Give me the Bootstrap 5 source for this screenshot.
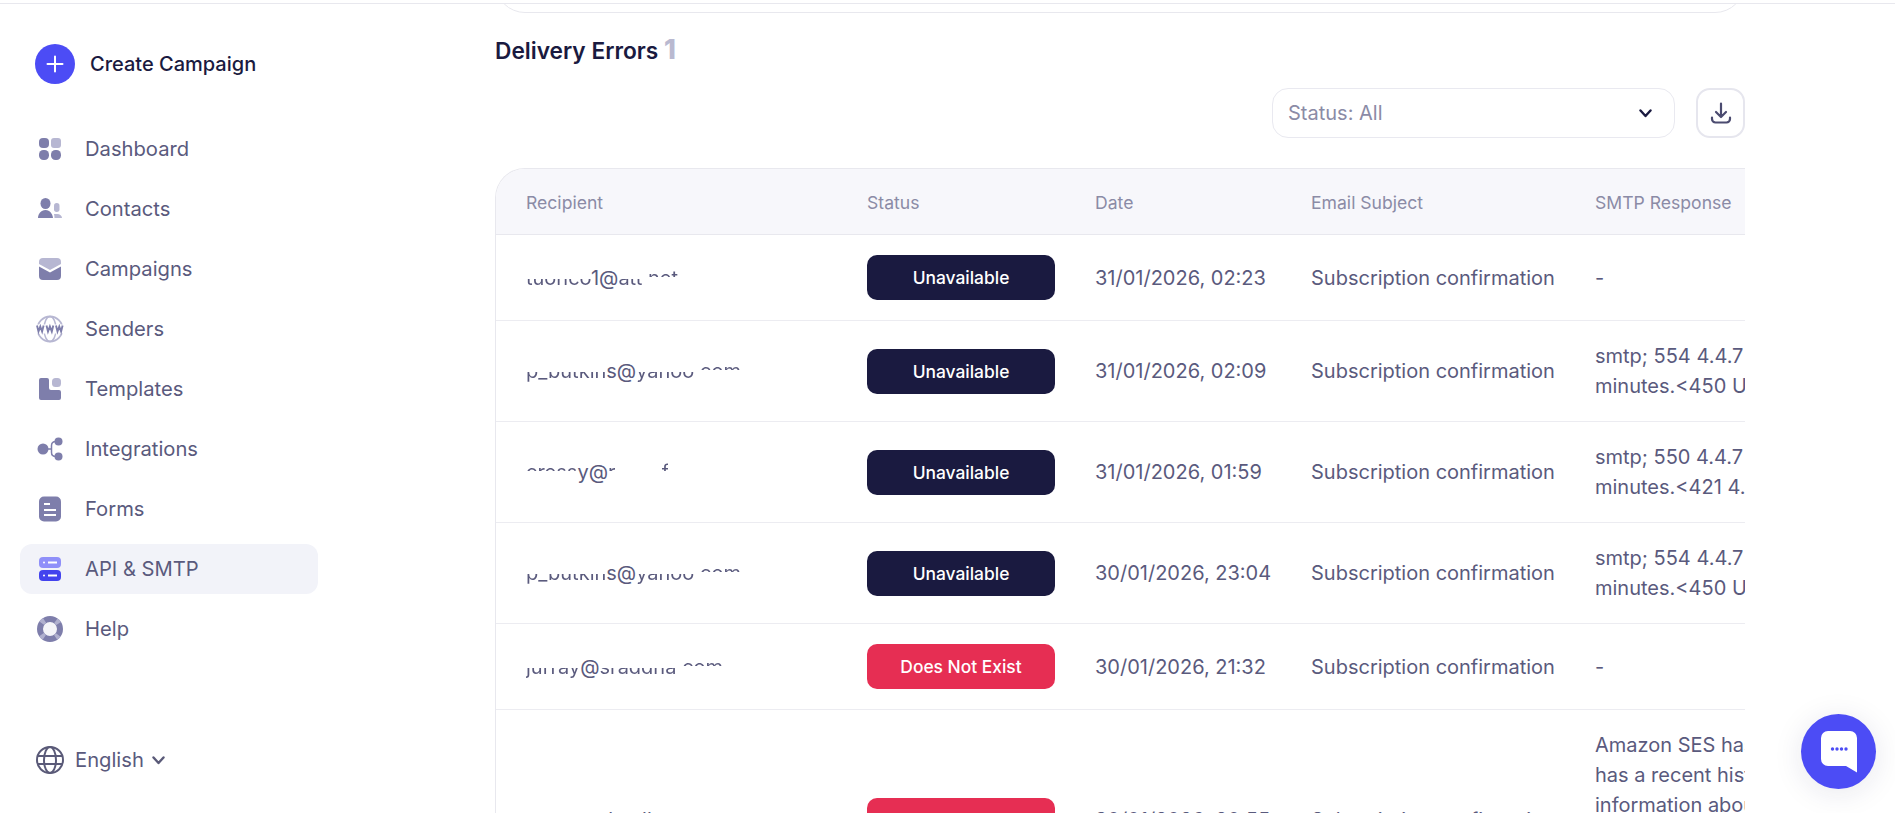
<!DOCTYPE html>
<html lang="en">
<head>
<meta charset="utf-8">
<title>Delivery Errors</title>
<link href="https://cdn.jsdelivr.net/npm/bootstrap@5.3.0/dist/css/bootstrap.min.css" rel="stylesheet">
<style>
html,body{height:813px;overflow:hidden}
body{font-family:Inter,"Liberation Sans",sans-serif;font-size:20px;line-height:30px;color:#5a5a7d;background:#fff}
.top-rule{height:4px;border-bottom:1px solid #e8e8ee}
.side-col{width:495px;flex:none;height:809px;padding:40px 0 0 20px}
.create-link{display:flex;align-items:center;gap:15px;padding-left:15px;color:#1a1a40;font-weight:500;text-decoration:none;height:40px}
.plus-disc{width:40px;height:40px;border-radius:50%;background:#4c4cf5;display:flex;align-items:center;justify-content:center}
.side-nav{width:298px;margin-top:40px}
.side-link{display:flex;align-items:center;gap:23px;height:50px;margin-bottom:10px;padding:0 0 0 18px;border-radius:12px;color:#5a5a7d;font-weight:400;font-size:20.2px}
.side-link.is-on{background:#f2f3f9}
.side-link:hover,.side-link:focus{color:#5a5a7d}
.lang-row{display:flex;align-items:center;gap:11px;margin-top:81px;padding-left:16px;color:#5a5a7d;font-size:20.2px}
.main-col{width:1250px;flex:none}
.card-stub{height:9px;overflow:hidden}
.card-stub>div{height:60px;margin-top:-51px;border:1px solid #e8e8ee;border-radius:30px}
.err-title{height:31px;font-size:22.7px;line-height:30px;font-weight:600;color:#1a1a40;margin:22px 0 0}
.err-title span{font-size:27px;font-weight:800;color:#b9b9d0}
.tools-row{display:flex;justify-content:flex-end;gap:21px;margin-top:22px}
.status-pick{width:403px;height:50px;border:1px solid #e9e9f0;border-radius:16px;background:#fff;color:#8b8ba6;font-size:20px;padding:0 22px 0 15px;display:flex;align-items:center;justify-content:space-between}
.dl-btn{width:49px;height:50px;border:2px solid #e6e6ee;border-radius:14px;background:#fff;padding:0;display:flex;align-items:center;justify-content:center}
.table-shell{margin-top:30px;border:1px solid #e8e8ee;border-right:0;border-bottom:0;border-top-left-radius:30px;overflow:hidden;width:1250px}
.err-grid{table-layout:fixed;width:1500px;margin:0;color:#5a5a7d;border-collapse:separate;border-spacing:0}
.err-grid th{background:#f7f7fb;color:#8b8ba6;font-size:17.6px;font-weight:400;line-height:25px;padding:21px 20px 19px;border-bottom:1px solid #e8e8ee;vertical-align:middle;box-shadow:none}
.err-grid td{padding:20px;border-bottom:1px solid #ececf1;vertical-align:middle;background:#fff;color:#5a5a7d;box-shadow:none;white-space:nowrap;font-size:20px;line-height:30px}
.err-grid .first-cell{padding-left:30px}
.state-tag{display:block;width:188px;height:45px;border-radius:10px;color:#fff;font-size:17.4px;font-weight:500;line-height:45px;text-align:center}
.tag-dark{background:#1a1a40}
.tag-red{background:#e62e53}
.cut-top,.cut-low{color:transparent;-webkit-background-clip:text;background-clip:text}
.cut-top{background-image:linear-gradient(#fff 0 53%,#5a5a7d 53%)}
.cut-low{background-image:linear-gradient(#5a5a7d 0 46%,#fff 46%)}
.blank{visibility:hidden}
.chat-fab{position:fixed;left:1801px;top:714px;width:75px;height:75px;border-radius:50%;background:#4c4cf5;box-shadow:0 4px 30px rgba(30,30,80,.1);display:flex;align-items:center;justify-content:center;border:0;padding:0}
</style>
</head>
<body>
<div class="top-rule"></div>
<div class="d-flex">
  <aside class="side-col">
    <a class="create-link" href="#">
      <span class="plus-disc"><svg width="18" height="18" viewBox="0 0 18 18"><path d="M9 1.500v15M1.500 9h15" stroke="#fff" stroke-width="2" stroke-linecap="round"/></svg></span>
      Create Campaign
    </a>
    <nav class="nav flex-column side-nav">
      <a class="nav-link side-link" href="#"><svg width="24" height="24" viewBox="0 0 24 24"><rect x="1" y="1" width="10" height="10" rx="4" fill="#7e7eab"/><rect x="13" y="1" width="10" height="10" rx="3" fill="#b7b7d2"/><rect x="1" y="13" width="10" height="10" rx="4.500" fill="#7e7eab"/><rect x="13" y="13" width="10" height="10" rx="4.500" fill="#7e7eab"/></svg>Dashboard</a>
      <a class="nav-link side-link" href="#"><svg width="24" height="24" viewBox="0 0 24 24"><ellipse cx="7.500" cy="6.500" rx="5" ry="5.500" fill="#7e7eab"/><path d="M0 21c0-4 3-8 7.500-8s7 4 7.500 8z" fill="#7e7eab"/><rect x="16" y="6" width="5.500" height="9" rx="2.700" fill="#b7b7d2"/><path d="M16 17h3c3 0 5 2 5 4h-7.500c0-1.500-.200-2.700-.500-4z" fill="#b7b7d2"/></svg>Contacts</a>
      <a class="nav-link side-link" href="#"><svg width="24" height="24" viewBox="0 0 24 24"><path d="M1 7V5a4 4 0 0 1 4-4h14a4 4 0 0 1 4 4v2l-11 6z" fill="#b7b7d2"/><path d="M1 9.500l11 6 11-6V19a4 4 0 0 1-4 4H5a4 4 0 0 1-4-4z" fill="#7e7eab"/></svg>Campaigns</a>
      <a class="nav-link side-link" href="#"><svg width="28" height="28" viewBox="0 0 28 28" style="margin:0 -2px"><circle cx="14" cy="14" r="12.500" fill="none" stroke="#b7b7d2" stroke-width="1.800"/><ellipse cx="14" cy="14" rx="6" ry="12.500" fill="none" stroke="#b7b7d2" stroke-width="1.500"/><rect x="0" y="9.500" width="28" height="9" fill="#fff"/><path d="M1 10.500l1.500 6 1.800-5 1.800 5 1.500-6M10.500 10.500l1.500 6 1.900-5 1.900 5 1.500-6M20 10.500l1.500 6 1.800-5 1.800 5 1.500-6" fill="none" stroke="#7e7eab" stroke-width="1.900"/></svg>Senders</a>
      <a class="nav-link side-link" href="#"><svg width="24" height="24" viewBox="0 0 24 24"><path d="M1 3a2 2 0 0 1 2-2h6a2 2 0 0 1 2 2v8a2 2 0 0 0 2 2h8a2 2 0 0 1 2 2v6a2 2 0 0 1-2 2H3a2 2 0 0 1-2-2z" fill="#7e7eab"/><rect x="14" y="1" width="9" height="9" rx="3.500" fill="#b7b7d2"/></svg>Templates</a>
      <a class="nav-link side-link" href="#"><svg width="28" height="24" viewBox="0 0 28 24" style="margin:0 -2px"><circle cx="7" cy="12" r="5.500" fill="#7e7eab"/><circle cx="22.500" cy="4.500" r="4" fill="#7e7eab"/><circle cx="22.500" cy="19.500" r="4" fill="#7e7eab"/><path d="M12 12h3.500M20 4.500c-3 0-4.500 1.500-4.500 4v7c0 2.500 1.500 4 4.500 4" fill="none" stroke="#7e7eab" stroke-width="1.500"/></svg>Integrations</a>
      <a class="nav-link side-link" href="#"><svg width="24" height="26" viewBox="0 0 24 26"><rect x="1" y="0.500" width="22" height="25" rx="5" fill="#7e7eab"/><path d="M6 8h6M6 14h12M6 19h12" stroke="#fff" stroke-width="2"/></svg>Forms</a>
      <a class="nav-link side-link is-on" href="#"><svg width="24" height="26" viewBox="0 0 24 26"><rect x="1" y="1" width="22" height="11" rx="4" fill="#8f8ff9"/><rect x="1" y="14" width="22" height="11" rx="4" fill="#4343ee"/><circle cx="6" cy="6.500" r="1" fill="#fff"/><path d="M10 6.500h9" stroke="#fff" stroke-width="2"/><circle cx="6" cy="19.500" r="1" fill="#fff"/><path d="M10 19.500h9" stroke="#fff" stroke-width="2"/></svg>API &amp; SMTP</a>
      <a class="nav-link side-link" href="#"><svg width="26" height="26" viewBox="0 0 26 26" style="margin:0 -1px"><circle cx="13" cy="13" r="10" fill="#f4f4f8" stroke="#7e7eab" stroke-width="6"/><circle cx="13" cy="13" r="10" fill="none" stroke="#b0b0ce" stroke-width="6" stroke-dasharray="4 11.700" stroke-dashoffset="2" transform="rotate(45 13 13)"/></svg>Help</a>
    </nav>
    <div class="lang-row">
      <svg width="28" height="28" viewBox="0 0 28 28" fill="none" stroke="#5a5a78" stroke-width="2"><circle cx="14" cy="14" r="13"/><ellipse cx="14" cy="14" rx="6" ry="13"/><path d="M1.500 10h25M1.500 18h25"/></svg>
      <span class="d-flex align-items-center gap-2">English <svg width="13" height="9" viewBox="0 0 13 9" fill="none" stroke="#5a5a78" stroke-width="2.400" stroke-linecap="round" stroke-linejoin="round"><path d="M1.500 1.500L6.500 7l5-5.500"/></svg></span>
    </div>
  </aside>
  <main class="main-col">
    <div class="card-stub"><div></div></div>
    <h2 class="err-title">Delivery Errors <span>1</span></h2>
    <div class="tools-row">
      <button type="button" class="status-pick">Status: All <svg width="13" height="9" viewBox="0 0 13 9" fill="none" stroke="#1a1a40" stroke-width="2.400" stroke-linecap="round" stroke-linejoin="round"><path d="M1.500 1.500L6.500 7l5-5.500"/></svg></button>
      <button type="button" class="dl-btn" aria-label="Download"><svg width="22" height="22" viewBox="0 0 22 22" fill="none" stroke="#4b4b70" stroke-width="2.200" stroke-linecap="round" stroke-linejoin="round"><path d="M11 1.500v12.500M6 10l5 5 5-5M2 15.500v1.500a3.500 3.500 0 0 0 3.500 3.500h11a3.500 3.500 0 0 0 3.500-3.500v-1.500"/></svg></button>
    </div>
    <div class="table-shell">
      <table class="table err-grid">
        <colgroup><col style="width:351px"><col style="width:228px"><col style="width:216px"><col style="width:284px"><col style="width:421px"></colgroup>
        <thead><tr><th class="first-cell">Recipient</th><th>Status</th><th>Date</th><th>Email Subject</th><th>SMTP Response</th></tr></thead>
        <tbody>
          <tr><td class="first-cell"><span class="cut-top">tuohco</span>1@<span class="cut-top">att</span><span class="cut-low">.net</span></td><td><span class="state-tag tag-dark">Unavailable</span></td><td>31/01/2026, 02:23</td><td>Subscription confirmation</td><td>-</td></tr>
          <tr><td class="first-cell"><span class="cut-top">p_butkin</span>s@<span class="cut-top">yahoo</span><span class="cut-low">.com</span></td><td><span class="state-tag tag-dark">Unavailable</span></td><td>31/01/2026, 02:09</td><td>Subscription confirmation</td><td>smtp; 554 4.4.7 Please try again in a few<br>minutes.&lt;450 User is over quota</td></tr>
          <tr><td class="first-cell"><span class="cut-low">cress</span>y@<span class="cut-low">r</span><span class="blank">oney</span><span class="cut-low">f</span><span class="blank">.co.uk</span></td><td><span class="state-tag tag-dark">Unavailable</span></td><td>31/01/2026, 01:59</td><td>Subscription confirmation</td><td>smtp; 550 4.4.7 Please try again in a few<br>minutes.&lt;421 4.7.0 Try again later</td></tr>
          <tr><td class="first-cell"><span class="cut-top">p_butkin</span>s@<span class="cut-top">yahoo</span><span class="cut-low">.com</span></td><td><span class="state-tag tag-dark">Unavailable</span></td><td>30/01/2026, 23:04</td><td>Subscription confirmation</td><td>smtp; 554 4.4.7 Please try again in a few<br>minutes.&lt;450 User is over quota</td></tr>
          <tr><td class="first-cell"><span class="cut-top">jurray</span>@<span class="cut-top">sraddha</span><span class="cut-low">.com</span></td><td><span class="state-tag tag-red">Does Not Exist</span></td><td>30/01/2026, 21:32</td><td>Subscription confirmation</td><td>-</td></tr>
          <tr><td class="first-cell">roseann.keell@msn.com</td><td><span class="state-tag tag-red">Does Not Exist</span></td><td>30/01/2026, 20:55</td><td>Subscription confirmation</td><td>Amazon SES has suppressed sending to this address<br>has a recent history of bounces. For more<br>information about this address see the account<br>suppression list in the SES console<br>&nbsp;<br>&nbsp;</td></tr>
        </tbody>
      </table>
    </div>
  </main>
</div>
<button type="button" class="chat-fab" aria-label="Chat"><svg width="36" height="42" viewBox="0 0 36 42"><path d="M7 0h22a7 7 0 0 1 7 7v34.500L25 35H7a7 7 0 0 1-7-7V7a7 7 0 0 1 7-7z" fill="#fff"/><g fill="#4c4cf5"><circle cx="11.500" cy="18" r="1.700"/><circle cx="16" cy="18" r="1.700"/><circle cx="20.500" cy="18" r="1.700"/><circle cx="25" cy="18" r="1.700"/></g></svg></button>
<script src="https://cdn.jsdelivr.net/npm/bootstrap@5.3.0/dist/js/bootstrap.bundle.min.js"></script>
</body>
</html>
